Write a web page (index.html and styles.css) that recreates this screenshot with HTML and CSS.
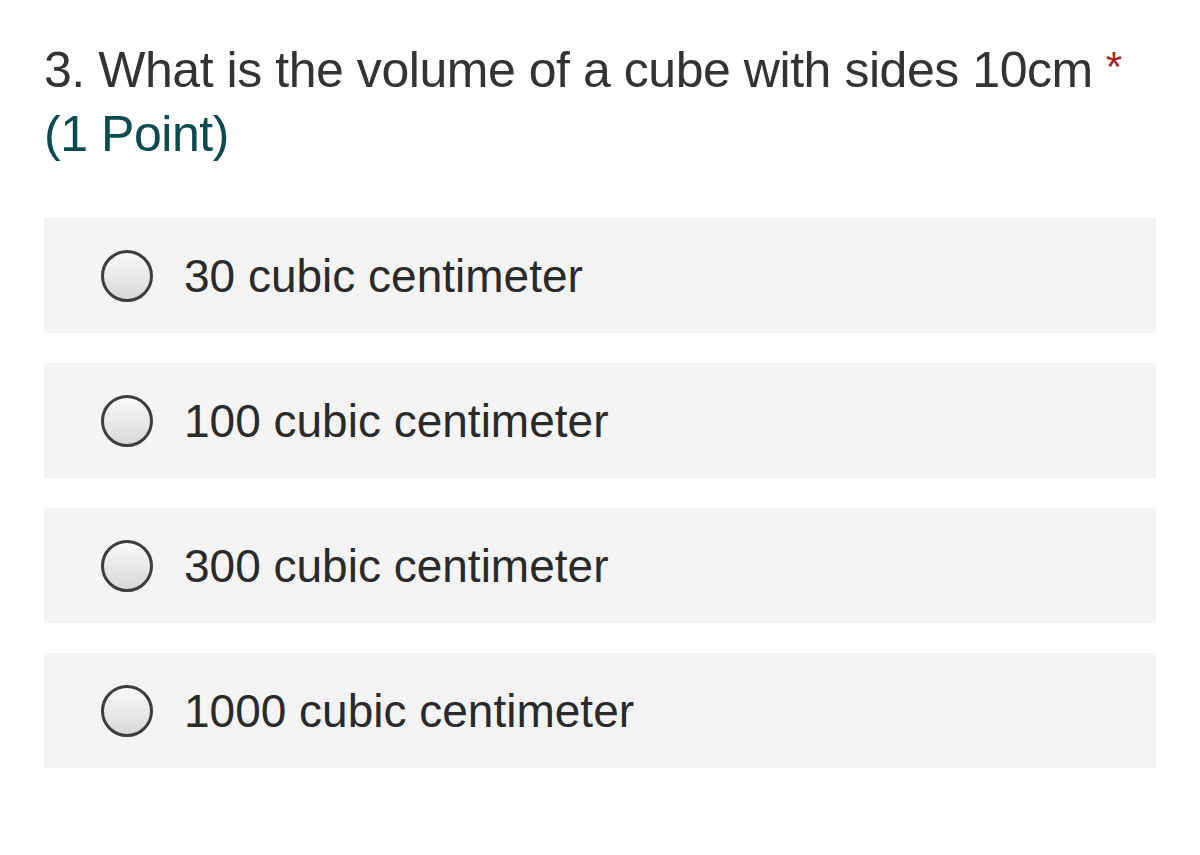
FILE: index.html
```html
<!DOCTYPE html>
<html>
<head>
<meta charset="utf-8">
<link rel="stylesheet" href="styles.css">
</head>
<body>
<div class="page">
  <div class="question">
    <div class="title"><span class="qtext">3. What is the volume of a cube with sides 10cm</span><span class="req">*</span></div>
    <div class="points">(1 Point)</div>
  </div>
  <div class="options">
    <label class="option"><span class="radio"></span><span class="otext">30 cubic centimeter</span></label>
    <label class="option"><span class="radio"></span><span class="otext">100 cubic centimeter</span></label>
    <label class="option"><span class="radio"></span><span class="otext">300 cubic centimeter</span></label>
    <label class="option"><span class="radio"></span><span class="otext">1000 cubic centimeter</span></label>
  </div>
</div>
</body>
</html>
```
FILE: styles.css
```css
html, body {
  margin: 0;
  padding: 0;
  background: #ffffff;
}
.page {
  width: 1200px;
  height: 855px;
  padding: 0 44px;
  box-sizing: border-box;
  font-family: "Liberation Sans", Arial, sans-serif;
}
.question {
  padding-top: 38px;
}
.title {
  font-size: 50px;
  line-height: 64px;
  color: #333333;
  white-space: nowrap;
  letter-spacing: -0.45px;
}
.req {
  color: #a4262c;
  font-size: 42px;
  line-height: 42px;
  vertical-align: top;
  margin-left: 13px;
  position: relative;
  top: 8px;
}
.points {
  font-size: 50px;
  line-height: 64px;
  color: #0b4a4e;
  letter-spacing: -0.45px;
}
.options {
  margin-top: 52px;
  display: flex;
  flex-direction: column;
  gap: 30px;
}
.option {
  display: flex;
  align-items: center;
  height: 115px;
  background: #f4f4f5;
  padding-left: 57px;
  box-sizing: border-box;
}
.radio {
  width: 46px;
  height: 46px;
  border: 3px solid #3d3d3d;
  border-radius: 50%;
  background: linear-gradient(#fafafa, #d8d8d8);
  flex: none;
}
.otext {
  margin-left: 31px;
  font-size: 46px;
  color: #2a2a2a;
}
```
